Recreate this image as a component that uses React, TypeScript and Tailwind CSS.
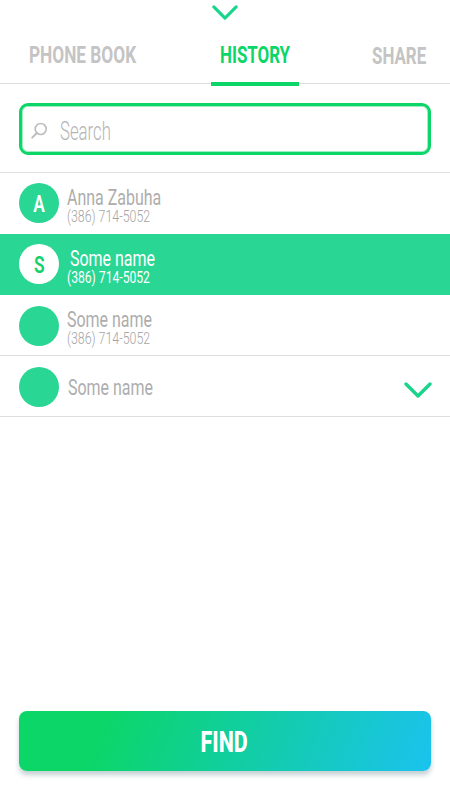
import React, { useState } from 'react';
import clsx from 'clsx';

const tabs = [
  { label: 'PHONE BOOK', scale: 'scale-x-[0.75]' },
  { label: 'HISTORY', scale: 'scale-x-[0.735]' },
  { label: 'SHARE', scale: 'scale-x-[0.735]' },
];

const contacts = [
  { initial: 'A', name: 'Anna Zabuha', phone: '(386) 714-5052', indent: '', pad: 'pt-[3px]' },
  { initial: 'S', name: 'Some name', phone: '(386) 714-5052', indent: 'ml-[2.5px]', pad: 'pt-[3px]' },
  { initial: '', name: 'Some name', phone: '(386) 714-5052', indent: '', pad: 'pt-[2px]' },
  { initial: '', name: 'Some name', phone: '', indent: 'ml-px', pad: 'pt-[9px]' },
];

const Chevron = ({ className }: { className?: string }) => (
  <svg viewBox="0 0 28 17" fill="none" className={className}>
    <path d="M2 2L14 14L26 2" stroke="#19d58b" strokeWidth="3.4" strokeLinecap="round" strokeLinejoin="round" />
  </svg>
);

const SearchIcon = () => (
  <svg viewBox="0 0 18 18" fill="none" className="w-[18px] h-[18px] mt-[4px] shrink-0">
    <circle cx="10.7" cy="7" r="5.5" stroke="#bdbdbd" strokeWidth="1.7" />
    <path d="M6.8 11L2.2 15.6" stroke="#bdbdbd" strokeWidth="2" strokeLinecap="round" />
  </svg>
);

const App = () => {
  const [activeTab, setActiveTab] = useState('HISTORY');
  const [selected, setSelected] = useState(1);

  return (
    <div className="w-[450px] h-[800px] bg-white font-['Roboto',sans-serif] flex flex-col overflow-hidden">
      <header className="h-[84px] border-b border-[#dedede] shrink-0 flex flex-col items-center">
        <Chevron className="w-[26px] h-[16px] mt-[5px] mr-px shrink-0" />
        {/* Tabs */}
        <nav className="w-full flex-1 flex pt-[21px] pl-[29px]">
          {tabs.map((tab, i) => (
            <button
              key={tab.label}
              onClick={() => setActiveTab(tab.label)}
              className={clsx(
                'relative h-[44px] text-left text-[23px] leading-[28px] font-bold whitespace-nowrap shrink-0 flex items-start',
                i === 0 && 'w-[182px]',
                i === 1 && 'w-[88px] pl-[9px]',
                i === 2 && 'ml-[73px] w-[60px] pt-px',
                activeTab === tab.label ? 'text-[#0bd667]' : 'text-[#c4c4c4]'
              )}
            >
              <span className={clsx('block origin-left', tab.scale)}>{tab.label}</span>
              {activeTab === tab.label && (
                <span className="absolute left-0 top-[40px] w-full h-[4px] bg-[#0bd667]" />
              )}
            </button>
          ))}
        </nav>
      </header>

      {/* Search */}
      <div className="h-[89px] border-b border-[#e2e2e2] shrink-0 px-[19px] pt-[19px]">
        <div className="h-[52px] border-[3px] border-[#0bd667] rounded-[9px] shadow-[inset_0_0_0_1px_rgba(11,214,103,0.4)] flex items-center pl-[8px]">
          <SearchIcon />
          <span className="ml-[12px] mt-[6px] text-[25px] leading-[30px] font-light text-[#b5b5b5] origin-left scale-x-[0.67]">
            Search
          </span>
        </div>
      </div>

      {/* Contacts */}
      <ul className="shrink-0">
        {contacts.map((contact, i) => {
          const active = i === selected;
          return (
            <li
              key={i}
              onClick={() => setSelected(i)}
              className={clsx(
                'h-[61px] pl-[19px] pr-[18px] flex items-start',
                active ? 'bg-[#29d694]' : 'bg-white',
                i > 1 ? 'pt-[11px] border-b border-[#dedede]' : 'pt-[10px]'
              )}
            >
              <div
                className={clsx(
                  'w-[40px] h-[40px] rounded-full shrink-0 flex items-center justify-center text-[24px] font-semibold',
                  active ? 'bg-white text-[#17d06b]' : 'bg-[#29d694] text-white'
                )}
              >
                <span className="block pt-[2px] scale-x-[0.72]">{contact.initial}</span>
              </div>
              <div className={clsx('ml-[8px] w-[120px] whitespace-nowrap', contact.pad)}>
                <div
                  className={clsx(
                    'text-[22.5px] leading-[22px] origin-left scale-x-[0.71]',
                    contact.indent,
                    active ? 'text-white' : 'text-[#adadad]'
                  )}
                >
                  {contact.name}
                </div>
                {contact.phone && (
                  <div
                    className={clsx(
                      'text-[16.5px] leading-[17px] origin-left',
                      active ? 'scale-x-[0.735] text-white' : 'scale-x-[0.75] font-light text-[#a5a5a5]'
                    )}
                  >
                    {contact.phone}
                  </div>
                )}
              </div>
              {!contact.phone && <Chevron className="w-[28px] h-[17px] ml-auto mt-[15px]" />}
            </li>
          );
        })}
      </ul>

      <button className="mt-auto mb-[29px] mx-[19px] h-[60px] shrink-0 rounded-[8px] bg-[linear-gradient(110deg,#0bd667_0%,#0bd667_20%,#1ac3ed_99%)] shadow-[0_4px_5px_rgba(60,100,110,0.3)] flex items-center justify-center text-white text-[29px] font-extrabold">
        <span className="block pt-[3px] pr-[2px] scale-x-[0.74]">FIND</span>
      </button>
    </div>
  );
};

export default App;
